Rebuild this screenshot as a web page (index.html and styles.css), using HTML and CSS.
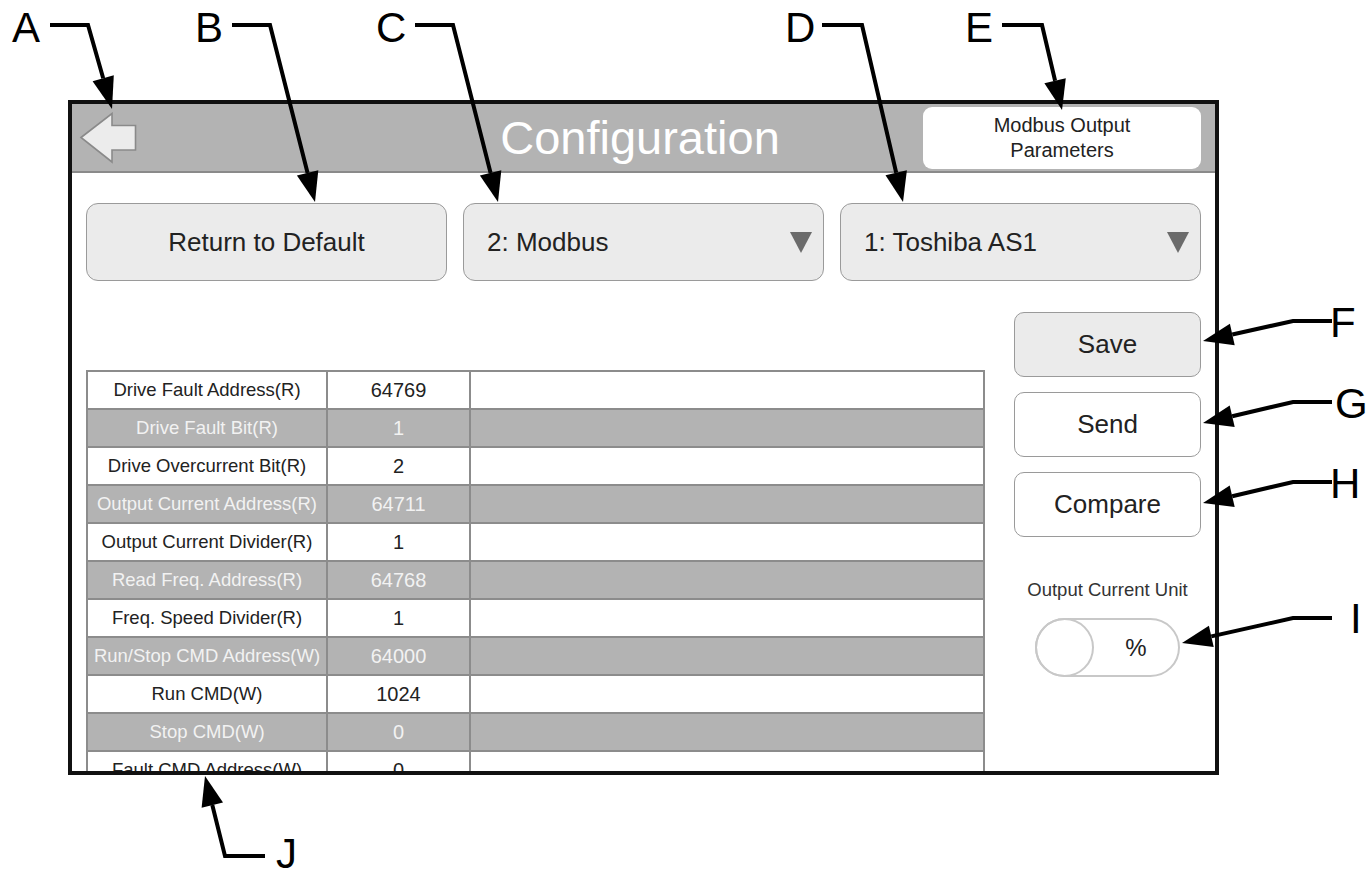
FILE: index.html
```html
<!DOCTYPE html>
<html lang="en">
<head>
    <meta charset="UTF-8">
    <meta name="viewport" content="width=device-width, initial-scale=1.0">
    <title>Configuration</title>
    <link rel="stylesheet" href="styles.css">
</head>
<body>

<div class="device">
  <header class="topbar">
    <div class="back">
      <svg width="58" height="52" viewBox="0 0 58 52">
        <polygon points="2,25.5 33,1.5 33,13.5 56.5,13.5 56.5,38 33,38 33,50" fill="#ececec" stroke="#8a8a8a" stroke-width="1.6"/>
      </svg>
    </div>
    <h1 class="title">Configuration</h1>
    <button class="page-btn">Modbus Output<br>Parameters</button>
  </header>

  <div class="controls">
    <button class="ctl-btn">Return to Default</button>
    <div class="select">
      <span>2: Modbus</span>
      <svg width="22" height="21" viewBox="0 0 22 21"><polygon points="0,0 22,0 11,21" fill="#6b6b6b"/></svg>
    </div>
    <div class="select">
      <span>1: Toshiba AS1</span>
      <svg width="22" height="21" viewBox="0 0 22 21"><polygon points="0,0 22,0 11,21" fill="#6b6b6b"/></svg>
    </div>
  </div>

  <div class="main">
    <div class="table-wrap">
      <table class="params">
        <colgroup>
          <col class="c-name">
          <col class="c-val">
          <col>
        </colgroup>
        <tr><td>Drive Fault Address(R)</td><td class="val">64769</td><td></td></tr>
        <tr class="alt"><td>Drive Fault Bit(R)</td><td class="val">1</td><td></td></tr>
        <tr><td>Drive Overcurrent Bit(R)</td><td class="val">2</td><td></td></tr>
        <tr class="alt"><td>Output Current Address(R)</td><td class="val">64711</td><td></td></tr>
        <tr><td>Output Current Divider(R)</td><td class="val">1</td><td></td></tr>
        <tr class="alt"><td>Read Freq. Address(R)</td><td class="val">64768</td><td></td></tr>
        <tr><td>Freq. Speed Divider(R)</td><td class="val">1</td><td></td></tr>
        <tr class="alt"><td>Run/Stop CMD Address(W)</td><td class="val">64000</td><td></td></tr>
        <tr><td>Run CMD(W)</td><td class="val">1024</td><td></td></tr>
        <tr class="alt"><td>Stop CMD(W)</td><td class="val">0</td><td></td></tr>
        <tr><td>Fault CMD Address(W)</td><td class="val">0</td><td></td></tr>
      </table>
    </div>

    <div class="side">
      <button class="side-btn save">Save</button>
      <button class="side-btn">Send</button>
      <button class="side-btn">Compare</button>
      <div class="unit-label">Output Current Unit</div>
      <div class="toggle">
        <span class="knob"></span>
        <span class="unit">%</span>
      </div>
    </div>
  </div>
</div>

<!-- callout letters and arrows -->
<svg class="callouts" width="1372" height="871" viewBox="0 0 1372 871">
  <g class="letters">
    <text x="12" y="42">A</text>
    <text x="195" y="42">B</text>
    <text x="376" y="42">C</text>
    <text x="785" y="42">D</text>
    <text x="965" y="42">E</text>
    <text x="1330" y="337">F</text>
    <text x="1335" y="418">G</text>
    <text x="1330" y="498">H</text>
    <text x="1350" y="633">I</text>
    <text x="276" y="868">J</text>
  </g>
  <g fill="none" stroke="#000" stroke-width="4">
    <polyline points="50,25 88,25 103.2,78.3"/>
    <polyline points="232,25 270,25 307.6,172.9"/>
    <polyline points="415,25 453,25 490.6,172.9"/>
    <polyline points="822,25 862,25 896.2,172.8"/>
    <polyline points="1002,25 1042,25 1055.1,80.8"/>
    <polyline points="1332,321 1293,321 1232.3,334.5"/>
    <polyline points="1332,402 1293,402 1232.2,416.2"/>
    <polyline points="1332,482 1293,482 1232.2,496.2"/>
    <polyline points="1332,618 1293,618 1211.3,636.4"/>
    <polyline points="265,856 225,856 212.3,805.1"/>
  </g>
  <g fill="#000">
    <polygon points="92.6,81.3 113.8,75.3 112,109"/>
    <polygon points="296.9,175.6 318.3,170.2 315,202"/>
    <polygon points="479.9,175.6 501.3,170.2 498,202"/>
    <polygon points="885.5,175.3 906.9,170.3 903,202"/>
    <polygon points="1044.4,83.3 1065.8,78.3 1062,110"/>
    <polygon points="1229.9,323.8 1234.7,345.2 1203,341"/>
    <polygon points="1229.7,405.5 1234.7,426.9 1203,423"/>
    <polygon points="1229.7,485.5 1234.7,506.9 1203,503"/>
    <polygon points="1208.9,625.7 1213.7,647.1 1182,643"/>
    <polygon points="223,802.4 201.6,807.8 205,776"/>
  </g>
</svg>

</body>
</html>
```

FILE: styles.css
```css
body {
    margin: 0;
    background: #fff;
    font-family: "Liberation Sans", Arial, sans-serif;
    color: #222;
}

button {
    font-family: inherit;
    color: inherit;
}

.device {
    box-sizing: border-box;
    width: 1151px;
    height: 675px;
    margin: 100px 0 0 68px;
    border: 4px solid #111;
    overflow: hidden;
    background: #fff;
}

/* top bar */
.topbar {
    display: grid;
    grid-template-columns: 1fr auto 1fr;
    align-items: center;
    height: 67px;
    padding: 0 14px 0 7px;
    background: #b3b3b3;
    border-bottom: 2px solid #8a8a8a;
}
.back svg {
    display: block;
}
.title {
    margin: 0;
    font-size: 47px;
    font-weight: normal;
    color: #fff;
}
.page-btn {
    justify-self: end;
    width: 278px;
    height: 62px;
    border: none;
    border-radius: 9px;
    background: #fff;
    font-size: 20px;
    line-height: 25px;
    color: #222;
}

/* first row */
.controls {
    display: grid;
    grid-template-columns: repeat(3, 1fr);
    gap: 16px;
    height: 78px;
    margin: 30px 14px 0;
}
.ctl-btn,
.select {
    box-sizing: border-box;
    height: 78px;
    background: #ebebeb;
    border: 1.5px solid #9a9a9a;
    border-radius: 12px;
    font-size: 26px;
    color: #222;
}
.select {
    display: flex;
    align-items: center;
    justify-content: space-between;
    padding: 0 11px 0 23px;
}
.select svg {
    display: block;
}

/* table + side panel */
.main {
    display: flex;
    gap: 29px;
    margin: 31px 14px 0;
}
.table-wrap {
    width: 899px;
    margin-top: 58px;
}
.params {
    width: 899px;
    table-layout: fixed;
    border-collapse: collapse;
    border: 2px solid #a0a0a0;
}
.params col.c-name { width: 240px; }
.params col.c-val { width: 143px; }
.params td {
    height: 36px;
    padding: 0;
    border: 2px solid #8c8c8c;
    text-align: center;
    font-size: 18.5px;
    color: #222;
    white-space: nowrap;
    overflow: hidden;
}
.params td.val {
    font-size: 20px;
}
.params tr.alt td {
    background: #b3b3b3;
    color: #f2f2f2;
}

.side {
    display: flex;
    flex-direction: column;
    width: 187px;
}
.side-btn {
    box-sizing: border-box;
    height: 65px;
    margin-bottom: 15px;
    background: #fff;
    border: 1.5px solid #9a9a9a;
    border-radius: 10px;
    font-size: 26px;
}
.side-btn.save {
    background: #ebebeb;
}
.unit-label {
    margin-top: 27px;
    text-align: center;
    font-size: 18.5px;
    color: #333;
}
.toggle {
    box-sizing: border-box;
    display: flex;
    align-items: center;
    align-self: center;
    width: 145px;
    height: 59px;
    margin-top: 17px;
    border: 2px solid #c8c8c8;
    border-radius: 30px;
}
.knob {
    box-sizing: border-box;
    width: 59px;
    height: 59px;
    margin-left: -2px;
    border: 2px solid #c8c8c8;
    border-radius: 50%;
}
.unit {
    flex: 1;
    text-align: center;
    font-size: 24px;
    color: #222;
}

/* annotation overlay */
.callouts {
    position: absolute;
    top: 0;
    left: 0;
    pointer-events: none;
}
.callouts text {
    font-family: "Liberation Sans", Arial, sans-serif;
    font-size: 42px;
    fill: #000;
}
```
